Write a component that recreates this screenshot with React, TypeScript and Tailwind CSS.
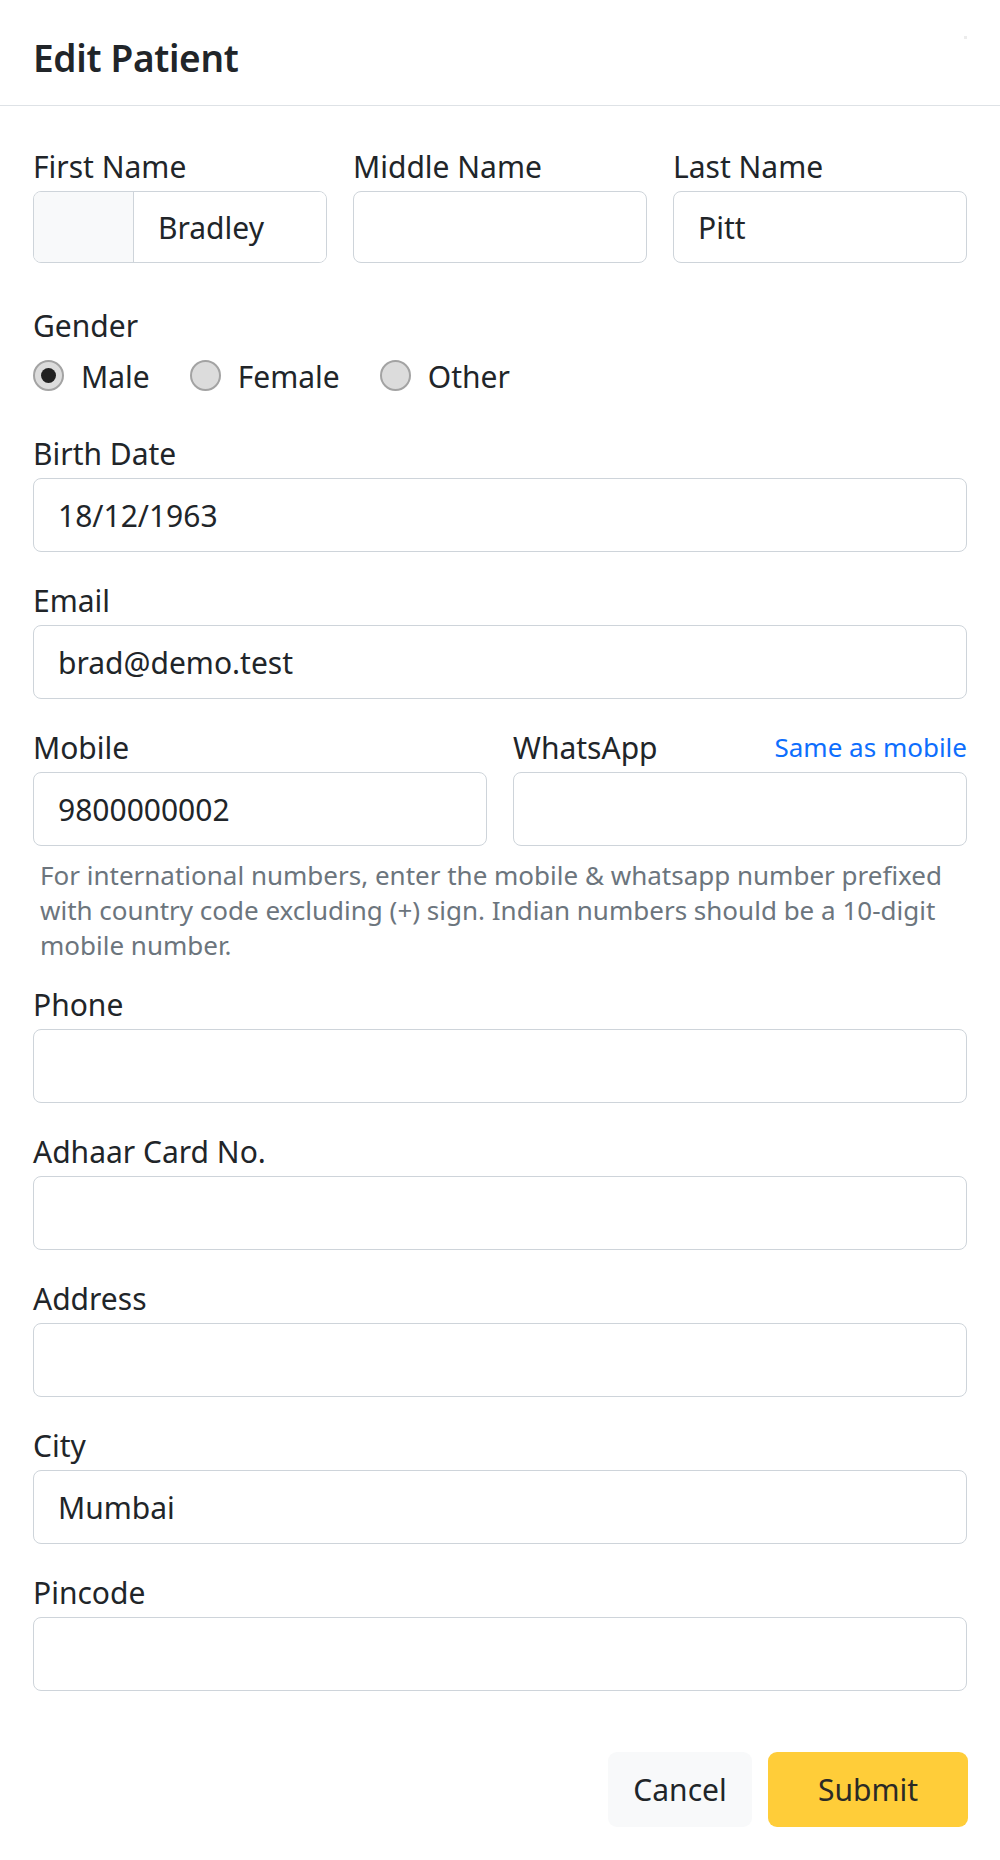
import React, { useState } from 'react';

const font = { fontFamily: '"Segoe UI", "Noto Sans", "Open Sans", sans-serif' };

const Label = ({ children }: { children: React.ReactNode }) => (
  <label className="block text-[30px] leading-[45px] text-[#212529] pt-[2px] mb-[2px]">{children}</label>
);

const TextInput = ({ value = '' }: { value?: string }) => (
  <input
    readOnly
    value={value}
    className="block w-full h-[74px] px-[24px] text-[30px] text-[#212529] bg-white border border-[#ced4da] rounded-[8px] outline-none"
  />
);

const Field = ({ label, value }: { label: string; value?: string }) => (
  <div className="mb-[24px]">
    <Label>{label}</Label>
    <TextInput value={value} />
  </div>
);

const Radio = ({ label, checked, onClick }: { label: string; checked: boolean; onClick: () => void }) => (
  <div className="flex items-start mr-[40px] cursor-pointer" onClick={onClick}>
    <span className="mt-[6px] w-[31px] h-[31px] rounded-full bg-[#dcdcdc] border-2 border-[#a3a3a3] flex items-center justify-center">
      {checked && <span className="w-[15px] h-[15px] rounded-full bg-[#212121]" />}
    </span>
    <span className="ml-[17px] text-[30px] leading-[45px] text-[#212529]">{label}</span>
  </div>
);

const EditPatient = () => {
  const [gender, setGender] = useState('Male');

  return (
    <div className="w-[1000px] min-h-[1860px] bg-white" style={font}>
      <div className="h-[106px] border-b border-[#dee2e6] px-[33px] pt-[35px] flex justify-between">
        <h5 className="text-[37px] leading-[46px] font-semibold tracking-[-0.3px] text-[#212529]">Edit Patient</h5>
        <span className="mt-[1px] w-[3px] h-[3px] bg-[#ececec]" />
      </div>

      <div className="px-[33px] pt-[36px]">
        <div className="grid grid-cols-3 gap-x-[26px] mb-[40px]">
          <div>
            <Label>First Name</Label>
            <div className="flex h-[72px] border border-[#ced4da] rounded-[8px] overflow-hidden">
              <span className="w-[100px] shrink-0 bg-[#f8f9fa] border-r border-[#ced4da]" />
              <input
                readOnly
                value="Bradley"
                className="min-w-0 flex-1 px-[24px] text-[30px] text-[#212529] bg-white outline-none"
              />
            </div>
          </div>
          <div>
            <Label>Middle Name</Label>
            <input readOnly value="" className="block w-full h-[72px] px-[24px] text-[30px] border border-[#ced4da] rounded-[8px] outline-none" />
          </div>
          <div>
            <Label>Last Name</Label>
            <input readOnly value="Pitt" className="block w-full h-[72px] px-[24px] text-[30px] text-[#212529] border border-[#ced4da] rounded-[8px] outline-none" />
          </div>
        </div>

        <div className="mb-[30px]">
          <div className="text-[30px] leading-[45px] text-[#212529] mb-[6px]">Gender</div>
          <div className="flex">
            {['Male', 'Female', 'Other'].map((g) => (
              <Radio key={g} label={g} checked={gender === g} onClick={() => setGender(g)} />
            ))}
          </div>
        </div>

        <Field label="Birth Date" value="18/12/1963" />
        <Field label="Email" value="brad@demo.test" />

        <div className="grid grid-cols-2 gap-x-[26px]">
          <div>
            <Label>Mobile</Label>
            <TextInput value="9800000002" />
          </div>
          <div>
            <div className="flex justify-between items-start pt-[2px] mb-[2px]">
              <span className="text-[30px] leading-[45px] text-[#212529]">WhatsApp</span>
              <a className="mt-[1px] text-[26px] leading-[42px] text-[#0d6efd] cursor-pointer">Same as mobile</a>
            </div>
            <TextInput />
          </div>
        </div>
        <div className="mt-[12px] mb-[17px] pl-[7px] text-[26px] leading-[35px] text-[#6c757d]">
          <span className="block whitespace-nowrap">For international numbers, enter the mobile &amp; whatsapp number prefixed</span>
          <span className="block whitespace-nowrap">with country code excluding (+) sign. Indian numbers should be a 10-digit</span>
          <span className="block whitespace-nowrap">mobile number.</span>
        </div>

        <Field label="Phone" />
        <Field label="Adhaar Card No." />
        <Field label="Address" />
        <Field label="City" value="Mumbai" />
        <Field label="Pincode" />
      </div>

      <div className="flex justify-end gap-[16px] pr-[32px] pt-[37px] pb-[33px]">
        <button className="w-[144px] h-[75px] rounded-[9px] bg-[#f8f9fa] text-[30px] text-[#212529]">Cancel</button>
        <button className="w-[200px] h-[75px] rounded-[9px] bg-[#ffcd39] text-[30px] text-[#2b2a26]">Submit</button>
      </div>
    </div>
  );
};

export default function App() {
  return <EditPatient />;
}
